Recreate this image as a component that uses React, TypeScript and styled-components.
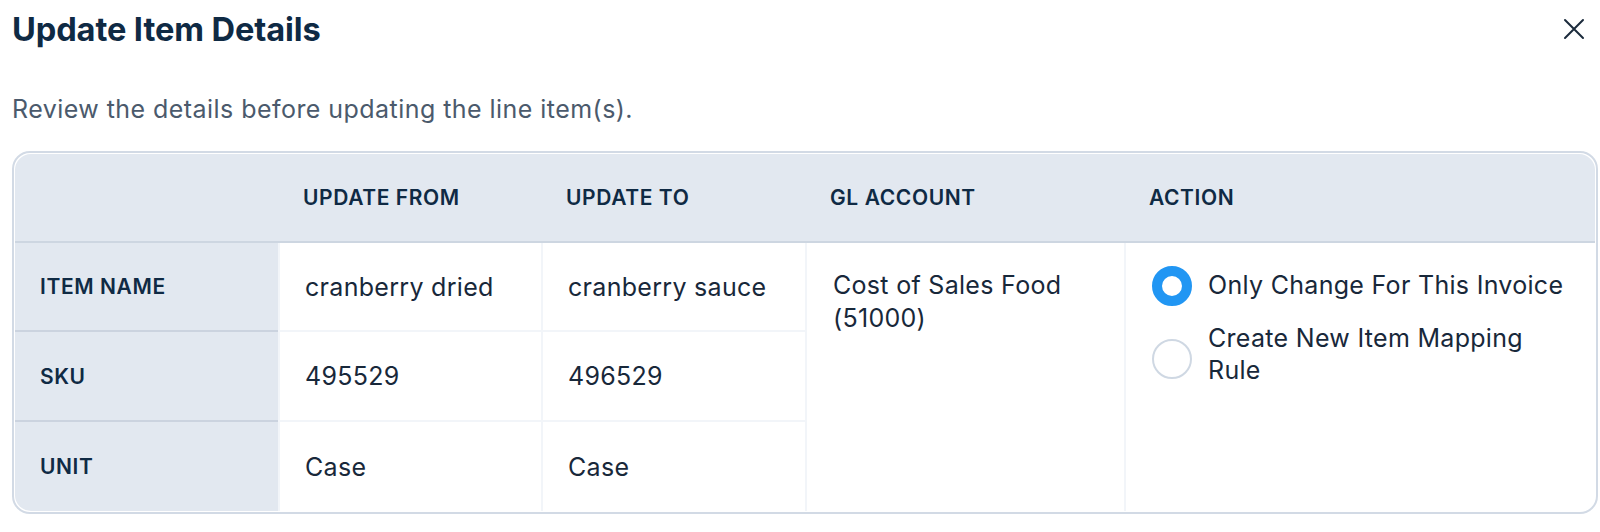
import { createGlobalStyle } from "styled-components";
import styled from "styled-components";

const Global = createGlobalStyle`
   * { box-sizing: border-box; }
   body {
      margin: 0;
      background: #fff;
      font-family: Inter, "Noto Sans", sans-serif;
      color: #13293d;
   }
`;

const Page = styled.div`
   padding: 0 2px 0 12px;
`;

const TitleBar = styled.div`
   display: flex;
   align-items: center;
   justify-content: space-between;
   height: 57px;
   padding-right: 12px;
`;

const Title = styled.h1`
   margin: 0;
   font-size: 32.6px;
   font-weight: 700;
   color: #0f2a44;
   letter-spacing: -0.1px;
`;

const CloseButton = styled.button`
   display: flex;
   align-items: center;
   justify-content: center;
   width: 24px;
   height: 24px;
   padding: 0;
   border: none;
   background: none;
   color: #1b2b3c;
   cursor: pointer;
`;

const Subtitle = styled.p`
   margin: 36px 0 26px;
   font-size: 25px;
   line-height: 32px;
   letter-spacing: 0.45px;
   color: #4b5a6c;
`;

const Frame = styled.div`
   border: 2px solid #d2dae5;
   border-radius: 18px;
   padding: 1px;
   background: #fff;
`;

const Grid = styled.div`
   display: grid;
   grid-template-columns: 263px 263px 264px 319px 1fr;
   grid-template-rows: 89px 89px 90px 89px;
   border-radius: 16px;
   overflow: hidden;
`;

const headText = `
   font-size: 21px;
   font-weight: 600;
   letter-spacing: 0.6px;
   color: #0f2a44;
`;

const HeadCell = styled.div`
   display: flex;
   align-items: center;
   padding-left: 25px;
   background: #e2e8f0;
   border-bottom: 2px solid #cdd6e1;
   ${headText}
`;

const LabelCell = styled.div<{ $last?: boolean }>`
   display: flex;
   align-items: center;
   padding-left: 25px;
   background: #e2e8f0;
   border-bottom: ${(p) => (p.$last ? "none" : "2px solid #cbd3df")};
   ${headText}
`;

const bodyText = `
   font-size: 25px;
   letter-spacing: 0.3px;
   color: #18283a;
`;

const ValueCell = styled.div<{ $last?: boolean }>`
   display: flex;
   align-items: center;
   padding-left: 25px;
   border-left: 2px solid #f2f5f9;
   border-bottom: ${(p) => (p.$last ? "none" : "2px solid #f2f5f9")};
   ${bodyText}
`;

const SpanCell = styled.div<{ $col: number }>`
   grid-column: ${(p) => p.$col};
   grid-row: 2 / span 3;
   padding: 26px 22px 0 26px;
   border-left: 2px solid #f2f5f9;
   line-height: 33px;
   ${bodyText}
`;

const Options = styled.div`
   display: flex;
   flex-direction: column;
   gap: 16px;
`;

const Option = styled.label`
   display: flex;
   align-items: flex-start;
   gap: 16px;
   cursor: pointer;
`;

const Radio = styled.span<{ $checked?: boolean }>`
   flex: none;
   width: 40px;
   height: 40px;
   margin-top: ${(p) => (p.$checked ? "-3px" : "17px")};
   border-radius: 50%;
   border: ${(p) => (p.$checked ? "10px solid #2196f3" : "2px solid #cfd8e3")};
   background: #fff;
`;

const OptionText = styled.span`
   line-height: 32px;
   ${bodyText}
`;

const rows = [
   { label: "ITEM NAME", from: "cranberry dried", to: "cranberry sauce" },
   { label: "SKU", from: "495529", to: "496529" },
   { label: "UNIT", from: "Case", to: "Case" },
];

export default function App() {
   return (
      <Page>
         <Global />
         <TitleBar>
            <Title>Update Item Details</Title>
            <CloseButton aria-label="Close">
               <svg width="22" height="22" viewBox="0 0 22 22" fill="none" stroke="currentColor" strokeWidth="2" strokeLinecap="round">
                  <path d="M2 2L20 20M20 2L2 20" />
               </svg>
            </CloseButton>
         </TitleBar>
         <Subtitle>Review the details before updating the line item(s).</Subtitle>
         <Frame>
            <Grid>
               <HeadCell />
               <HeadCell>UPDATE FROM</HeadCell>
               <HeadCell>UPDATE TO</HeadCell>
               <HeadCell>GL ACCOUNT</HeadCell>
               <HeadCell>ACTION</HeadCell>
               {rows.map((r, i) => {
                  const last = i === rows.length - 1;
                  return [
                     <LabelCell key={r.label + "l"} $last={last} style={{ gridRow: i + 2, gridColumn: 1 }}>
                        {r.label}
                     </LabelCell>,
                     <ValueCell key={r.label + "f"} $last={last} style={{ gridRow: i + 2, gridColumn: 2 }}>
                        {r.from}
                     </ValueCell>,
                     <ValueCell key={r.label + "t"} $last={last} style={{ gridRow: i + 2, gridColumn: 3 }}>
                        {r.to}
                     </ValueCell>,
                  ];
               })}
               <SpanCell $col={4}>
                  Cost of Sales Food
                  <br />
                  (51000)
               </SpanCell>
               <SpanCell $col={5}>
                  <Options>
                     <Option>
                        <Radio $checked />
                        <OptionText>Only Change For This Invoice</OptionText>
                     </Option>
                     <Option>
                        <Radio />
                        <OptionText>
                           Create New Item Mapping
                           <br />
                           Rule
                        </OptionText>
                     </Option>
                  </Options>
               </SpanCell>
            </Grid>
         </Frame>
      </Page>
   );
}
